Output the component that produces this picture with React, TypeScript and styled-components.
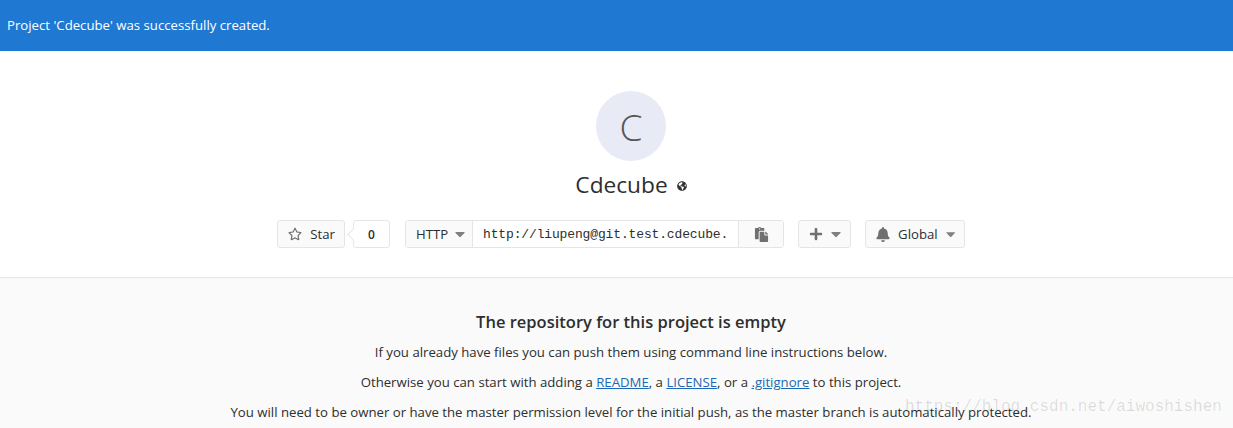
import React from 'react';
import styled, { createGlobalStyle } from 'styled-components';
import { FaBell, FaCaretDown, FaGlobeAmericas, FaPaste, FaPlus, FaRegStar } from 'react-icons/fa';

const GlobalStyle = createGlobalStyle`
  html, body {
    margin: 0;
    height: 428px;
    overflow: hidden;
    background: #fff;
    font-family: "Open Sans", "Noto Sans", sans-serif;
    color: #2e2e2e;
  }
`;

function App() {
  return (
    <Page>
      <GlobalStyle />
      <Flash>Project 'Cdecube' was successfully created.</Flash>
      <Hero>
        <Avatar>C</Avatar>
        <TitleRow>
          <Title>Cdecube</Title>
          <VisibilityIcon />
        </TitleRow>
        <Actions>
          <StarGroup>
            <Button $width={68}>
              <FaRegStar size={14} color="#707070" />
              Star
            </Button>
            <Count>0</Count>
          </StarGroup>
          <CloneGroup>
            <Protocol>
              HTTP
              <Caret />
            </Protocol>
            <CloneUrl>http://liupeng@git.test.cdecube.</CloneUrl>
            <CopyButton>
              <FaPaste size={15} color="#707070" />
            </CopyButton>
          </CloneGroup>
          <Button $width={53}>
            <FaPlus size={14} color="#707070" />
            <Caret />
          </Button>
          <Button $width={100}>
            <FaBell size={15} color="#707070" />
            Global
            <Caret />
          </Button>
        </Actions>
      </Hero>
      <Empty>
        <EmptyTitle>The repository for this project is empty</EmptyTitle>
        <EmptyLine>If you already have files you can push them using command line instructions below.</EmptyLine>
        <EmptyLine>
          Otherwise you can start with adding a <DocLink>README</DocLink>, a <DocLink>LICENSE</DocLink>, or a{' '}
          <DocLink>.gitignore</DocLink> to this project.
        </EmptyLine>
        <EmptyLine>
          You will need to be owner or have the master permission level for the initial push, as the master branch is
          automatically protected.
        </EmptyLine>
      </Empty>
      <Watermark>https://blog.csdn.net/aiwoshishen</Watermark>
    </Page>
  );
}

export default App;

const Page = styled.div`
  position: relative;
  height: 428px;
  overflow: hidden;
`;

const Flash = styled.div`
  height: 51px;
  box-sizing: border-box;
  padding: 0 7px 2px;
  display: flex;
  align-items: center;
  background: #1f78d1;
  color: #fff;
  font-size: 13.2px;
`;

const Hero = styled.section`
  height: 227px;
  box-sizing: border-box;
  padding: 40px 0 0 29px;
  display: flex;
  flex-direction: column;
  align-items: center;
  border-bottom: 1px solid #e5e5e5;
`;

const Avatar = styled.div`
  width: 70px;
  height: 70px;
  border-radius: 50%;
  background: #e8eaf6;
  color: #555;
  display: flex;
  align-items: center;
  justify-content: center;
  font-size: 37px;
  font-weight: 300;
`;

const TitleRow = styled.div`
  height: 28px;
  margin-top: 9px;
  display: flex;
  align-items: center;
  gap: 9px;
`;

const Title = styled.h1`
  margin: 0;
  font-size: 22.7px;
  font-weight: 400;
  color: #2e2e2e;
`;

const VisibilityIcon = styled(FaGlobeAmericas)`
  width: 10px;
  height: 10px;
  margin-top: 3px;
  color: #333;
`;

const Actions = styled.div`
  margin-top: 22px;
  padding-right: 20px;
  display: flex;
  gap: 14px;
  font-size: 13.2px;
`;

const Button = styled.div<{ $width?: number }>`
  height: 28px;
  width: ${(p) => (p.$width ? `${p.$width}px` : 'auto')};
  box-sizing: border-box;
  padding: 0 9px 0 10px;
  display: flex;
  align-items: center;
  justify-content: space-between;
  gap: 8px;
  background: #fafafa;
  border: 1px solid #e5e5e5;
  border-radius: 3px;
  color: #2e2e2e;
`;

const StarGroup = styled.div`
  display: flex;
  gap: 8px;
  margin-right: 1px;
`;

const Count = styled.div`
  position: relative;
  width: 37px;
  height: 28px;
  box-sizing: border-box;
  display: flex;
  align-items: center;
  justify-content: center;
  background: #fff;
  border: 1px solid #e5e5e5;
  border-radius: 3px;
  font-size: 12px;
  font-weight: 600;

  &::before {
    content: '';
    position: absolute;
    left: -5px;
    top: 9px;
    width: 8px;
    height: 8px;
    background: #fff;
    border-left: 1px solid #e5e5e5;
    border-bottom: 1px solid #e5e5e5;
    transform: rotate(45deg);
  }
`;

const CloneGroup = styled.div`
  display: flex;
  height: 28px;
  box-sizing: border-box;
  border: 1px solid #e5e5e5;
  border-radius: 3px;
`;

const Protocol = styled.div`
  width: 67px;
  box-sizing: border-box;
  padding: 0 7px 0 10px;
  display: flex;
  align-items: center;
  justify-content: space-between;
  background: #fafafa;
  border-right: 1px solid #e5e5e5;
`;

const CloneUrl = styled.div`
  width: 265px;
  box-sizing: border-box;
  padding-left: 10px;
  display: flex;
  align-items: center;
  font-family: "Liberation Mono", monospace;
  font-size: 13px;
  letter-spacing: -0.14px;
  color: #2e2e2e;
`;

const CopyButton = styled.div`
  width: 44px;
  display: flex;
  align-items: center;
  justify-content: center;
  background: #fafafa;
  border-left: 1px solid #e5e5e5;
`;

const Caret = styled(FaCaretDown)`
  width: 10px;
  height: 16px;
  color: #808080;
`;

const Empty = styled.section`
  height: 150px;
  box-sizing: border-box;
  padding: 32px 0 0 29px;
  background: #fafafa;
  display: flex;
  flex-direction: column;
  align-items: center;
  white-space: nowrap;
`;

const EmptyTitle = styled.h4`
  margin: 0 0 8px;
  height: 24px;
  line-height: 24px;
  font-size: 16.5px;
  font-weight: 600;
  color: #2e2e2e;
`;

const EmptyLine = styled.p`
  margin: 0 0 10px;
  height: 20px;
  line-height: 20px;
  font-size: 13.2px;
  color: #2e2e2e;
`;

const DocLink = styled.a`
  color: #1b69b6;
  text-decoration: underline;
`;

const Watermark = styled.div`
  position: absolute;
  left: 905px;
  top: 398px;
  font-family: "Liberation Mono", monospace;
  font-size: 16px;
  color: rgba(0, 0, 0, 0.13);
  white-space: nowrap;
`;
